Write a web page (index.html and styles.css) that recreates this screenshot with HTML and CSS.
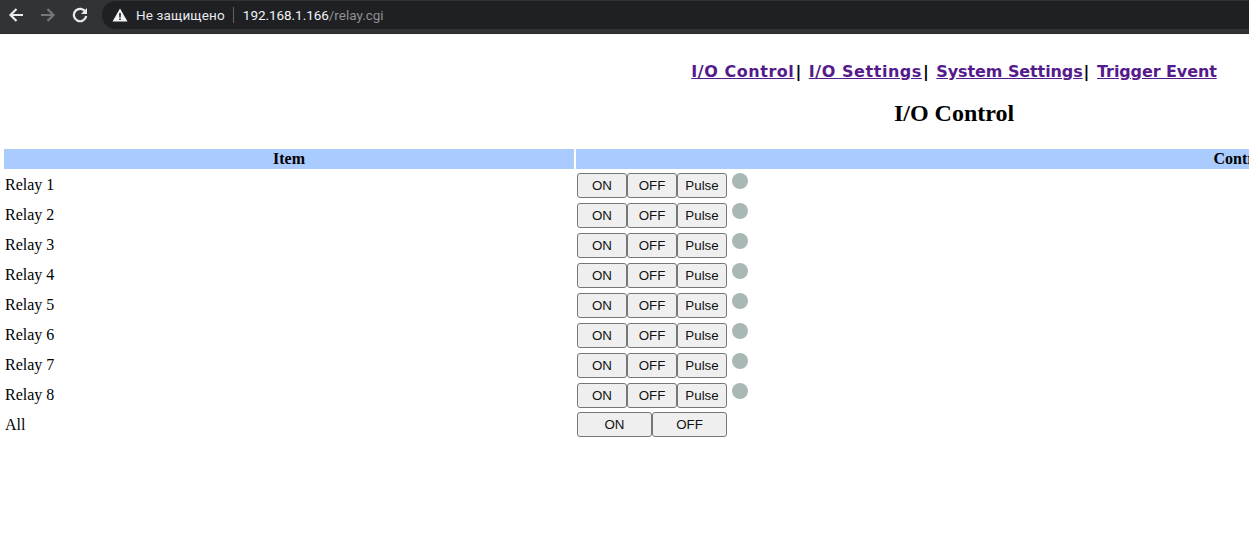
FILE: index.html
```html
<!DOCTYPE html>
<html lang="ru">
<head>
  <meta charset="UTF-8">
  <title>I/O Control</title>
  <link rel="stylesheet" href="styles.css">
</head>
<body>
  <div class="toolbar">
    <svg class="nav-icon" viewBox="0 0 16 16"><path d="M15 8H3M8.5 2 2.5 8l6 6" fill="none" stroke="#e8eaed" stroke-width="2.2"/></svg>
    <svg class="nav-icon" viewBox="0 0 16 16"><path d="M1 8h12M7.5 2l6 6-6 6" fill="none" stroke="#75777a" stroke-width="2.2"/></svg>
    <svg class="nav-icon" viewBox="0 0 16 16"><path d="M13.6 5.2A6.2 6.2 0 1 0 14.2 9" fill="none" stroke="#e8eaed" stroke-width="2.2"/><path d="M15 1v6H9z" fill="#e8eaed"/></svg>
    <div class="omnibox">
      <svg class="warn" viewBox="0 0 16 16"><path d="M8 1.5 15.5 14.5H.5z" fill="#f1f3f4"/><path d="M7.2 6h1.6v4.6H7.2zM7.2 11.4h1.6V13H7.2z" fill="#202124"/></svg>
      <span class="secure">Не защищено</span>
      <span class="divider"></span>
      <span class="host">192.168.1.166</span><span class="path">/relay.cgi</span>
    </div>
  </div>

  <div class="page">
    <div class="nav">
      <a class="io" href="#">I/O Control</a><span class="sep">|</span> <a class="io" href="#">I/O Settings</a><span class="sep">|</span> <a href="#">System Settings</a><span class="sep">|</span> <a href="#">Trigger Event</a>
    </div>
    <h2>I/O Control</h2>

    <table>
      <tr>
        <th class="item">Item</th>
        <th>Control</th>
      </tr>
      <tr>
        <td>Relay 1</td>
        <td><div class="ctl"><button>ON</button><button>OFF</button><button>Pulse</button><span class="dot"></span></div></td>
      </tr>
      <tr>
        <td>Relay 2</td>
        <td><div class="ctl"><button>ON</button><button>OFF</button><button>Pulse</button><span class="dot"></span></div></td>
      </tr>
      <tr>
        <td>Relay 3</td>
        <td><div class="ctl"><button>ON</button><button>OFF</button><button>Pulse</button><span class="dot"></span></div></td>
      </tr>
      <tr>
        <td>Relay 4</td>
        <td><div class="ctl"><button>ON</button><button>OFF</button><button>Pulse</button><span class="dot"></span></div></td>
      </tr>
      <tr>
        <td>Relay 5</td>
        <td><div class="ctl"><button>ON</button><button>OFF</button><button>Pulse</button><span class="dot"></span></div></td>
      </tr>
      <tr>
        <td>Relay 6</td>
        <td><div class="ctl"><button>ON</button><button>OFF</button><button>Pulse</button><span class="dot"></span></div></td>
      </tr>
      <tr>
        <td>Relay 7</td>
        <td><div class="ctl"><button>ON</button><button>OFF</button><button>Pulse</button><span class="dot"></span></div></td>
      </tr>
      <tr>
        <td>Relay 8</td>
        <td><div class="ctl"><button>ON</button><button>OFF</button><button>Pulse</button><span class="dot"></span></div></td>
      </tr>
      <tr class="all">
        <td>All</td>
        <td><div class="ctl"><button class="wide">ON</button><button class="wide">OFF</button></div></td>
      </tr>
    </table>
  </div>
</body>
</html>
```

FILE: styles.css
```css
* {
  box-sizing: border-box;
}

html, body {
  height: 100%;
}

body {
  margin: 0;
  background: #fff;
  color: #000;
  font-family: "Liberation Serif", serif;
  font-size: 16px;
  overflow: hidden;
}

.toolbar {
  display: flex;
  align-items: center;
  height: 34px;
  padding: 0 0 3px 8px;
  background: #323336;
  border-bottom: 1px solid #2a2a2c;
  gap: 16px;
}

.nav-icon {
  width: 16px;
  height: 16px;
  flex: none;
}

.omnibox {
  display: flex;
  align-items: center;
  flex: 1;
  height: 28px;
  margin-left: -2px;
  padding-left: 10px;
  border-radius: 14px 0 0 14px;
  background: #1f2023;
  font-family: "Roboto", "Liberation Sans", sans-serif;
  font-size: 13.5px;
  white-space: nowrap;
}

.warn {
  width: 16px;
  height: 16px;
  margin-right: 8px;
}

.secure {
  color: #e8eaed;
  letter-spacing: 0.15px;
}

.divider {
  width: 1px;
  height: 16px;
  margin: 0 9px 0 8px;
  background: #5f6164;
}

.host {
  color: #f1f3f4;
  letter-spacing: -0.05px;
}

.path {
  color: #8e9094;
}

.page {
  width: 1908px;
}

.nav {
  padding-top: 27px;
  text-align: center;
  font-family: "DejaVu Sans", sans-serif;
  font-size: 16px;
  font-weight: bold;
  line-height: 22px;
}

.nav a {
  color: #551a8b;
  letter-spacing: -0.1px;
}

.nav a.io {
  letter-spacing: 0.55px;
}

.sep {
  margin: 0 2px 0 1px;
}

h2 {
  margin: 16px 0 20px;
  text-align: center;
  font-size: 24px;
  line-height: 28px;
}

table {
  width: 1904px;
  margin-left: 2px;
  border-spacing: 2px;
  table-layout: fixed;
}

th, td {
  padding: 0 1px;
  height: 28px;
}

th {
  height: 20px;
  padding: 0;
  background: #a9cbfd;
  text-align: center;
  line-height: 18px;
}

.item {
  width: 570px;
}

.all td {
  height: 27px;
}

.ctl {
  display: flex;
  align-items: flex-start;
}

button {
  width: 50px;
  height: 25px;
  padding: 0;
  border: 1px solid #767676;
  border-radius: 3px;
  background: #efefef;
  color: #111;
  font-family: "Liberation Sans", sans-serif;
  font-size: 13.33px;
}

button.wide {
  width: 75px;
}

.dot {
  width: 16px;
  height: 16px;
  margin: 0 0 0 5px;
  border-radius: 50%;
  background: #a9b8b5;
}
```
